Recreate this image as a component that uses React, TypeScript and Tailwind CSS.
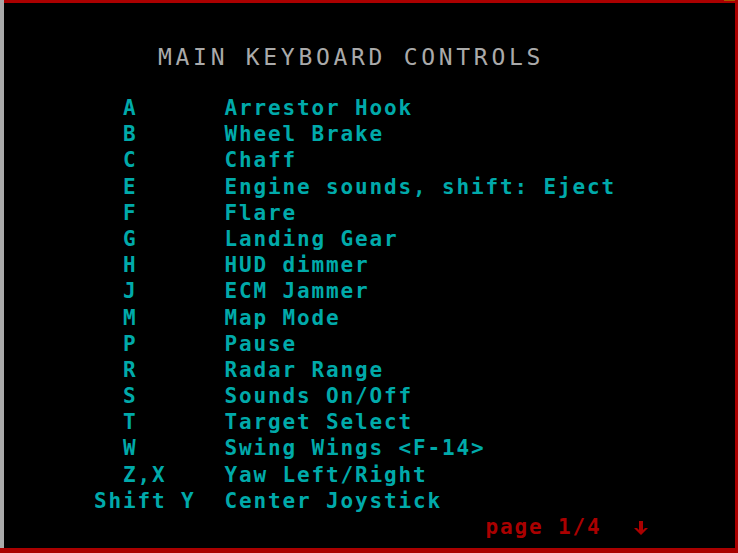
import React from "react";

const rows: [string, string][] = [
  ["  A", "Arrestor Hook"],
  ["  B", "Wheel Brake"],
  ["  C", "Chaff"],
  ["  E", "Engine sounds, shift: Eject"],
  ["  F", "Flare"],
  ["  G", "Landing Gear"],
  ["  H", "HUD dimmer"],
  ["  J", "ECM Jammer"],
  ["  M", "Map Mode"],
  ["  P", "Pause"],
  ["  R", "Radar Range"],
  ["  S", "Sounds On/Off"],
  ["  T", "Target Select"],
  ["  W", "Swing Wings <F-14>"],
  ["  Z,X", "Yaw Left/Right"],
  ["Shift Y", "Center Joystick"],
];

export default function App() {
  return (
    <div className="w-[738px] h-[553px] bg-[#aa0000] flex flex-col overflow-hidden">
      <div className="flex flex-1 min-h-0">
        <div className="w-[4px] bg-[#aaaaaa]" />
        <div className="flex-1 flex flex-col min-w-0">
          <div className="h-[3px] flex justify-end">
            <div className="w-[11px] h-[1px] bg-[#aa5500]" />
          </div>
          <div className="flex-1 bg-black flex flex-col">
            <div
              className="pt-[41px] pl-[154px] h-[67px] leading-[26px] text-[23px] text-[#aaaaaa] tracking-[3.7px] whitespace-pre"
              style={{ fontFamily: '"DejaVu Sans Mono", monospace' }}
            >
              MAIN KEYBOARD CONTROLS
            </div>
            <div
              className="mt-[25px] pl-[90px] flex flex-col text-[21px] leading-[26.2px] font-bold tracking-[1.86px] text-[#00aaaa]"
              style={{ fontFamily: '"DejaVu Sans Mono", monospace' }}
            >
              {rows.map(([k, d]) => (
                <div key={k} className="whitespace-pre h-[26.2px]">
                  {(k + "         ").slice(0, 9)}
                  {d}
                </div>
              ))}
              <div className="whitespace-pre h-[26.2px] text-[#aa0000] flex items-center">
                <span>{"                           page 1/4  "}</span>
                <svg width="16" height="16" viewBox="0 0 16 16" className="ml-[2px] mt-[1px]">
                  <rect x="6" y="1" width="4" height="11" fill="#aa0000" />
                  <polygon points="1,8 4,8 8,12 12,8 15,8 8,15" fill="#aa0000" />
                </svg>
              </div>
            </div>
          </div>
        </div>
        <div className="w-[3px]" />
      </div>
      <div className="h-[5px]" />
    </div>
  );
}
